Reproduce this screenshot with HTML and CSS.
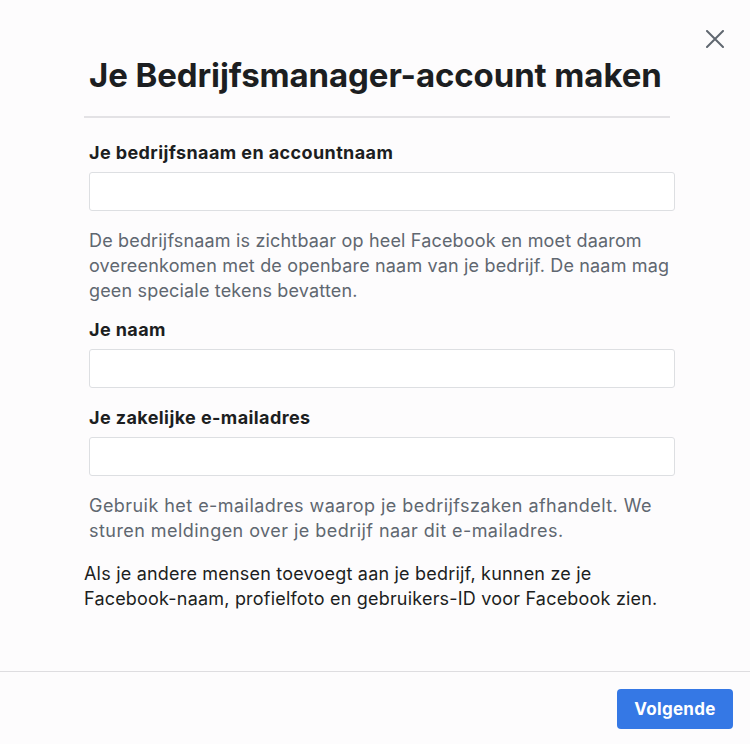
FILE: index.html
```html
<!DOCTYPE html>
<html lang="nl">
<head>
    <meta charset="UTF-8">
    <meta name="viewport" content="width=device-width, initial-scale=1.0">
    <title>Je Bedrijfsmanager-account maken</title>
    <link rel="stylesheet" href="styles.css">
</head>
<body>
    <div class="dialog">
        <button class="close" aria-label="Sluiten">
            <svg width="18" height="18" viewBox="0 0 18 18">
                <path d="M1 1 L17 17 M17 1 L1 17" stroke="#606770" stroke-width="2" stroke-linecap="round" fill="none"/>
            </svg>
        </button>

        <div class="content">
            <div class="header">
                <h1>Je Bedrijfsmanager-account maken</h1>
            </div>

            <form class="form">
                <div class="field">
                    <label for="company">Je bedrijfsnaam en accountnaam</label>
                    <input type="text" id="company">
                    <p class="hint hint-tight">De bedrijfsnaam is zichtbaar op heel Facebook en moet daarom overeenkomen met de openbare naam van je bedrijf. De naam mag geen speciale tekens bevatten.</p>
                </div>
                <div class="field">
                    <label for="name">Je naam</label>
                    <input type="text" id="name">
                </div>
                <div class="field">
                    <label for="email">Je zakelijke e-mailadres</label>
                    <input type="email" id="email">
                    <p class="hint">Gebruik het e-mailadres waarop je bedrijfszaken afhandelt. We sturen meldingen over je bedrijf naar dit e-mailadres.</p>
                </div>
            </form>

            <p class="note">Als je andere mensen toevoegt aan je bedrijf, kunnen ze je Facebook-naam, profielfoto en gebruikers-ID voor Facebook zien.</p>
        </div>

        <div class="footer">
            <button class="next" type="button">Volgende</button>
        </div>
    </div>
</body>
</html>
```

FILE: styles.css
```css
body {
    margin: 0;
    background: #fdfcfd;
    font-family: Inter, "Liberation Sans", Arial, sans-serif;
    color: #1c1e21;
}
.dialog {
    position: relative;
    width: 750px;
    height: 744px;
    display: flex;
    flex-direction: column;
}
.close {
    position: absolute;
    top: 30px;
    right: 26px;
    padding: 0;
    border: none;
    background: none;
    cursor: pointer;
    line-height: 0;
}
.content {
    flex: 1;
    padding: 0 80px 0 84px;
}
.header {
    padding-top: 55px;
    padding-bottom: 21px;
    border-bottom: 2px solid #e3e2e5;
}
h1 {
    margin: 0 0 0 5px;
    font-size: 33px;
    line-height: 40px;
    font-weight: 700;
    letter-spacing: -0.1px;
}
.form {
    margin: 23px -5px 0 5px;
}
.field {
    margin-bottom: 18px;
}
label {
    display: block;
    margin-bottom: 7px;
    font-size: 18px;
    line-height: 24px;
    font-weight: 700;
    letter-spacing: 0.4px;
}
input {
    display: block;
    box-sizing: border-box;
    width: 100%;
    height: 39px;
    margin: 0;
    padding: 0 10px;
    border: 1px solid #dddfe2;
    border-radius: 3px;
    background: #fff;
    font: inherit;
}
.hint {
    margin: 17px 0 -3px;
    color: #606770;
    font-size: 18px;
    line-height: 25px;
    letter-spacing: 0.45px;
}
.hint-tight {
    letter-spacing: 0.17px;
}
.note {
    margin: 21px 0 0;
    font-size: 18px;
    line-height: 25px;
    letter-spacing: 0.2px;
}
.footer {
    display: flex;
    justify-content: flex-end;
    padding: 17px 17px 15px;
    border-top: 1px solid #dedde0;
}
.next {
    width: 116px;
    height: 40px;
    border: none;
    border-radius: 4px;
    background: #3578e5;
    color: #fff;
    font: inherit;
    font-size: 17px;
    font-weight: 700;
    letter-spacing: 0.3px;
    cursor: pointer;
}
```
